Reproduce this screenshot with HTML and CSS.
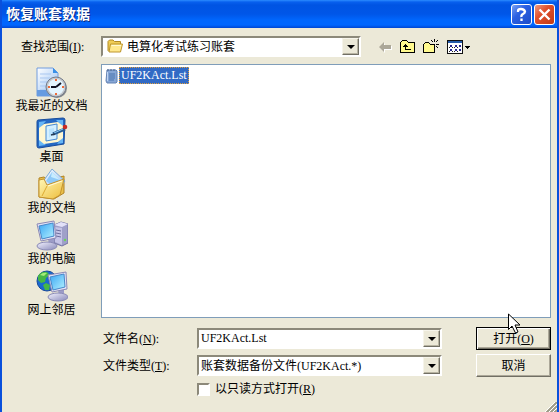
FILE: index.html
```html
<!DOCTYPE html>
<html lang="zh-CN">
<head>
    <meta charset="UTF-8">
    <meta name="viewport" content="width=device-width, initial-scale=1.0">
    <title>恢复账套数据</title>
    <link rel="stylesheet" href="styles.css">
</head>
<body>
    <div class="dialog">
        <header class="title-bar">
            <h1>恢复账套数据</h1>
            <button type="button" class="title-button" aria-label="帮助">
                <svg width="19" height="19" viewBox="0 0 19 19" fill="none" stroke="#fff" stroke-width="2.3"><path d="M6 7V6Q6 4 9 4T13 6.500Q13 8 11 9T9.500 12M9.500 13.500V16"/></svg>
            </button>
            <button type="button" class="title-button close" aria-label="关闭">
                <svg width="19" height="19" viewBox="0 0 19 19" fill="none" stroke="#fff" stroke-width="2.4"><path d="M4.500 4.500L14.500 14.500M14.500 4.500L4.500 14.500"/></svg>
            </button>
        </header>

        <form class="content">
            <div class="look-in">
                <label for="folder">查找范围(<u>I</u>):</label>
                <div class="combo with-icon">
                    <svg class="folder-icon" width="16" height="16" viewBox="0 0 16 16">
                        <path d="M1 3.500L2.500 2H6L7.500 3.500H13.500V13.500H2L1 12.500Z" fill="#f0cd55" stroke="#b28b25"/>
                        <path d="M3.500 6H15.500L13.500 14H2Z" fill="#ffe88c" stroke="#bd962f"/>
                        <path d="M4.500 7.500H14" stroke="#fff9d0"/>
                    </svg>
                    <select id="folder"><option>电算化考试练习账套</option></select>
                    <span class="arrow"></span>
                </div>
                <div class="toolbar">
                    <button type="button" aria-label="后退">
                        <svg width="16" height="16" viewBox="0 0 16 16"><path d="M3 9L8 4V7H15V11H8V14Z" fill="#fff"/><path d="M2 8L7 3V6H14V10H7V13Z" fill="#aca899"/></svg>
                    </button>
                    <button type="button" aria-label="向上一级">
                        <svg width="16" height="16" viewBox="0 0 16 16" shape-rendering="crispEdges"><path d="M.5 13.500V3.500L2.500 1.500H6.500L8.500 3.500H14.500V13.500Z" fill="#fff98e" stroke="#000"/><path d="M5 5H6V6H7V7H8V8H6V10H11V11H5V8H3V7H4V6H5Z" fill="#000"/></svg>
                    </button>
                    <button type="button" aria-label="新建文件夹">
                        <svg width="17" height="16" viewBox="0 0 17 16" shape-rendering="crispEdges"><path d="M.5 13.500V5.500L2.500 3.500H5.500L7.500 5.500H11.500V13.500Z" fill="#fff98e" stroke="#000"/><path d="M11 0h1v3h-1zM8 1h1v1H8zM9 2h1v1H9zM14 1h1v1h-1zM13 2h1v1h-1zM7 5h3v1H7zM13 5h3v1h-3zM11 7h1v2h-1zM13 7h1v1h-1zM14 8h1v1h-1z" fill="#000"/></svg>
                    </button>
                    <button type="button" aria-label="查看">
                        <svg width="24" height="16" viewBox="0 0 24 16" shape-rendering="crispEdges">
                            <path d="M.5 1.500H15.500V14.500H.5Z" fill="#fff" stroke="#111"/>
                            <path d="M1 2H15V4H1Z" fill="#245ba8"/>
                            <path d="M3 6h2v2H3zM8 6h2v2H8zM12 6h2v2h-2zM3 10h2v2H3zM8 10h2v2H8zM12 10h2v2h-2z" fill="#28288c"/>
                            <path d="M5 8h1v1H5zM10 8h1v1h-1zM5 12h1v1H5zM10 12h1v1h-1zM2 8h1v1H2zM7 8h1v1H7zM2 12h1v1H2zM7 12h1v1H7z" fill="#222"/>
                            <path d="M18 7h5v1h-5zM19 8h3v1h-3zM20 9h1v1h-1z" fill="#000"/>
                        </svg>
                    </button>
                </div>
            </div>

            <nav class="places">
                <button type="button">
                    <svg width="32" height="32" viewBox="0 0 32 32">
                        <defs>
                            <linearGradient id="paper" x2="1" y2="1"><stop stop-color="#fff"/><stop offset="1" stop-color="#8fbcf3"/></linearGradient>
                            <linearGradient id="screen" x2="1" y2="1"><stop stop-color="#39a6f4"/><stop offset="1" stop-color="#b4f2ff"/></linearGradient>
                            <linearGradient id="plastic" x2="1" y2="1"><stop stop-color="#f4f3ff"/><stop offset="1" stop-color="#8788b9"/></linearGradient>
                            <linearGradient id="yellow" x2="1" y2="1"><stop stop-color="#fff7b6"/><stop offset="1" stop-color="#edbc38"/></linearGradient>
                        </defs>
                        <path d="M1 2H17L22 7V30H1Z" fill="url(#paper)" stroke="#739cdd"/>
                        <path d="M17 2V7H22Z" fill="#3990e8"/>
                        <path d="M4 8H15M4 12H14M4 16H12M4 20H10M4 24H10" stroke="#a9c7f0"/>
                        <path d="M1 30V24H10L14 30Z" fill="#669be1"/>
                        <circle cx="21" cy="22" r="10" fill="#85878e"/>
                        <circle cx="20" cy="21" r="9" fill="#e4f5ff" stroke="#c4c8ce" stroke-width="2"/>
                        <circle cx="20" cy="21" r="10" fill="none" stroke="#737b89" stroke-width="1"/>
                        <path d="M20 21L25 17M20 21H15" stroke="#112" stroke-width="2"/>
                        <path d="M20 13V15M20 27V29M12 21H14M26 21H28" stroke="#ec6a38" stroke-width="2"/>
                    </svg>
                    <span>我最近的文档</span>
                </button>
                <button type="button">
                    <svg width="32" height="32" viewBox="0 0 32 32">
                        <path d="M2 3L27 1Q29 1 29 3L28 27L3 31Q1 31 1 29V5Q1 3 2 3Z" fill="#2468c4" stroke="#174c9c"/>
                        <path d="M3 5L10 4L3 12ZM20 3L27 3V10ZM3 22V29L10 28ZM21 27L27 26V20Z" fill="#66b6f6"/>
                        <path d="M8 7L22 5L27 9V21L22 25L8 27L3 23V11Z" fill="#fff7d1"/>
                        <path d="M10 9L21 7V22L10 24Z" fill="#d4f0ff" stroke="#4689d3"/>
                        <path d="M13 12L18 11V16L13 21Z" fill="#b9e4ff"/>
                        <path d="M17 17L29 12" stroke="#285c93" stroke-width="3"/>
                        <path d="M18 16L27 12" stroke="#8acef8"/>
                        <path d="M15 18L19 17" stroke="#263c55" stroke-width="1.5"/>
                        <circle cx="29" cy="10" r="2.300" fill="#c92c22"/>
                    </svg>
                    <span>桌面</span>
                </button>
                <button type="button">
                    <svg width="32" height="32" viewBox="0 0 32 32">
                        <path d="M3 10L8 9L12 12L28 8V25L18 31L3 29Z" fill="#eac049" stroke="#b28427"/>
                        <path d="M16 1L29 13L20 24L6 15Z" fill="url(#paper)" stroke="#7aaad9"/>
                        <path d="M16 4L24 12L18 19L10 13Z" fill="#8ec9f8"/>
                        <path d="M16 4L24 12L15 9Z" fill="#c7ecff"/>
                        <path d="M3 12L8 11L11 17L28 11L24 27L17 31L3 29Z" fill="url(#yellow)" stroke="#c39330"/>
                        <path d="M11 18L6 28" stroke="#dcaa32"/>
                        <path d="M12 18L26 13" stroke="#fffadc"/>
                    </svg>
                    <span>我的文档</span>
                </button>
                <button type="button">
                    <svg width="32" height="32" viewBox="0 0 32 32">
                        <path d="M18 6L25 3L32 5V24L26 27L18 24Z" fill="#9fa0c9" stroke="#7373a3"/>
                        <path d="M18 6L25 3L32 5L26 8Z" fill="#e2e1f8"/>
                        <path d="M19 8L26 9V26L19 23Z" fill="#c5c4e7"/>
                        <path d="M20 11L25 12M20 14L25 15M20 17L25 18" stroke="#6c6d9d"/>
                        <circle cx="29" cy="21" r="1.200" fill="#68d858"/>
                        <path d="M12 20L18 19L18 25L13 26Z" fill="#9c9cc7"/>
                        <ellipse cx="11" cy="27" rx="10" ry="4" fill="url(#plastic)" stroke="#8a8ab6"/>
                        <path d="M1 5L18 2L20 19L5 22Z" fill="#e3e2f5" stroke="#8c8ab5"/>
                        <path d="M3 7L17 4L18 17L6 20Z" fill="url(#screen)" stroke="#4788ca"/>
                    </svg>
                    <span>我的电脑</span>
                </button>
                <button type="button">
                    <svg width="32" height="32" viewBox="0 0 32 32">
                        <circle cx="11" cy="11" r="10" fill="#1a69cf" stroke="#174999"/>
                        <path d="M2 6Q5 1 11 2L14 5L10 8L9 12L5 13L2 10ZM10 13L14 15L13 20L9 20L7 15Z" fill="#46b747"/>
                        <path d="M4 5Q7 2 11 3L8 6Z" fill="#a5ec79"/>
                        <path d="M22 20L28 19L28 26L23 26Z" fill="#9c9cc7"/>
                        <ellipse cx="22" cy="27" rx="10" ry="4" fill="url(#plastic)" stroke="#8a8ab6"/>
                        <path d="M12 5L30 2L31 19L16 22Z" fill="#e3e2f5" stroke="#8c8ab5"/>
                        <path d="M14 7L28 4L29 17L17 20Z" fill="url(#screen)" stroke="#4788ca"/>
                    </svg>
                    <span>网上邻居</span>
                </button>
            </nav>

            <div class="file-list">
                <button type="button" class="file">
                    <svg width="13" height="16" viewBox="0 0 13 16"><path d="M2 2H11L12 3V14L11 15H2L1 13Z" fill="#86a6d6" stroke="#6583b3"/><path d="M3 1V3M6 1V3M9 1V3" stroke="#4a648f"/><path d="M4 6H10M4 8H10M4 10H10M4 12H9" stroke="#4a74ae"/><path d="M2.500 4V13" stroke="#bfd5f2"/></svg>
                    <span>UF2KAct.Lst</span>
                </button>
            </div>

            <div class="fields">
                <label for="file-name">文件名(<u>N</u>):</label>
                <div class="combo">
                    <input type="text" id="file-name" value="UF2KAct.Lst">
                    <span class="arrow"></span>
                </div>
                <div class="action">
                    <button type="submit" class="push default">打开(<u>O</u>)</button>
                    <svg class="cursor" width="13" height="21" viewBox="0 0 13 21"><path d="M.5 1V16.500L4 13L7.500 20L10 19L7 12H12Z" fill="#fff" stroke="#000"/></svg>
                </div>
                <label for="file-type">文件类型(<u>T</u>):</label>
                <div class="combo">
                    <select id="file-type"><option>账套数据备份文件(UF2KAct.*)</option></select>
                    <span class="arrow"></span>
                </div>
                <button type="button" class="push">取消</button>
                <label class="read-only"><input type="checkbox">以只读方式打开(<u>R</u>)</label>
            </div>
        </form>
        <svg class="grip" width="12" height="12" viewBox="0 0 12 12"><path d="M0 12L12 0M4 12L12 4M8 12L12 8" stroke="#9d9a87" stroke-width="2"/><path d="M-1 11L11 -1M3 11L12 2M7 11L12 6" stroke="#fff"/></svg>
    </div>
</body>
</html>
```
FILE: styles.css
```css
* {
    margin: 0;
    padding: 0;
    box-sizing: border-box;
}

body, button, input, select {
    font-family: "Liberation Serif", "Noto Sans CJK SC", serif;
    font-size: 12px;
    line-height: 16px;
    color: #000;
}

button {
    border: none;
    background: none;
}

svg {
    display: block;
}

.dialog {
    position: relative;
    display: flex;
    flex-direction: column;
    min-height: 100vh;
    background: #ece9d8;
    border: solid #0a50dc;
    border-width: 0 2px 1px;
}

.title-bar {
    display: flex;
    align-items: center;
    gap: 2px;
    height: 28px;
    padding: 1px 2px 0 4px;
    background: linear-gradient(#2b8cff 0, #0860ee 2px, #0054e3 5px, #0056e8 14px, #0066fd 20px, #0066ff 25px, #0046d2 28px);
}

.title-bar h1 {
    flex: 1;
    font-size: 14px;
    line-height: 20px;
    font-weight: bold;
    color: #fff;
    text-shadow: 1px 1px #0a2a80;
}

.title-button {
    width: 21px;
    height: 21px;
    border: 1px solid #fff;
    border-radius: 3px;
    background: linear-gradient(135deg, #7aa2f4, #2b60e2 40%, #1c4cc8);
}

.title-button.close {
    background: linear-gradient(135deg, #f09a80, #e0502c 40%, #c03a16);
}

.content {
    flex: 1;
    display: grid;
    grid-template-columns: 99px 1fr;
    grid-template-rows: 21px 1fr auto;
    row-gap: 7px;
    padding: 8px 6px 17px 0;
}

.look-in {
    grid-column: 1 / 3;
    display: grid;
    grid-template-columns: 83px 1fr 174px;
    column-gap: 16px;
    align-items: center;
}

.look-in label {
    padding-left: 19px;
    white-space: nowrap;
}

.toolbar {
    display: flex;
    gap: 7px;
}

.combo {
    position: relative;
    height: 21px;
    border: 2px solid;
    border-color: #8c897a #fff #fff #8c897a;
    background: #fff;
}

.combo input, .combo select {
    display: block;
    width: 100%;
    height: 17px;
    padding: 0 20px 0 2px;
    border: none;
    outline: none;
    background: none;
    appearance: none;
}

.combo.with-icon select {
    padding-left: 24px;
}

.folder-icon {
    position: absolute;
    left: 4px;
    top: 0;
}

.arrow {
    position: absolute;
    top: 0;
    right: 0;
    display: grid;
    place-items: center;
    width: 17px;
    height: 17px;
    border: 1px solid;
    border-color: #f6f4ea #716f64 #716f64 #f6f4ea;
    box-shadow: inset -1px -1px #b8b4a2;
    background: #ece9d8;
    pointer-events: none;
}

.arrow::after {
    content: "";
    border: solid transparent;
    border-width: 4px 4px 0;
    border-top-color: #000;
}

.places {
    display: flex;
    flex-direction: column;
    gap: 3px;
    padding-top: 2px;
}

.places button {
    display: flex;
    flex-direction: column;
    align-items: center;
}

.file-list {
    padding: 2px 3px;
    border: 1px solid #7f9db9;
    background: #fff;
}

.file {
    display: flex;
    align-items: center;
    gap: 1px;
}

.file span {
    padding: 0 1px;
    border: 1px dotted #e0a040;
    background: #316ac5;
    color: #fff;
    line-height: 15px;
}

.fields {
    grid-column: 1 / 3;
    display: grid;
    grid-template-columns: 94px 1fr 75px;
    row-gap: 4px;
    align-items: center;
    padding: 2px 0 0 101px;
}

.fields .combo {
    margin-right: 34px;
}

.action {
    position: relative;
}

.push {
    width: 100%;
    height: 23px;
    border: 1px solid;
    border-color: #fff #716f64 #716f64 #fff;
    box-shadow: inset -1px -1px #aca899;
}

.push.default {
    border-color: #000;
    box-shadow: inset 1px 1px #fff, inset -1px -1px #716f64, inset -2px -2px #aca899;
}

.cursor {
    position: absolute;
    right: 30px;
    bottom: 16px;
}

.read-only {
    grid-column: 2;
    display: flex;
    align-items: center;
}

.read-only input {
    width: 13px;
    height: 13px;
    margin-right: 5px;
    border: 2px solid;
    border-color: #8c897a #fff #fff #8c897a;
    background: #fff;
    appearance: none;
}

.grip {
    position: absolute;
    right: 0;
    bottom: 0;
}
```
